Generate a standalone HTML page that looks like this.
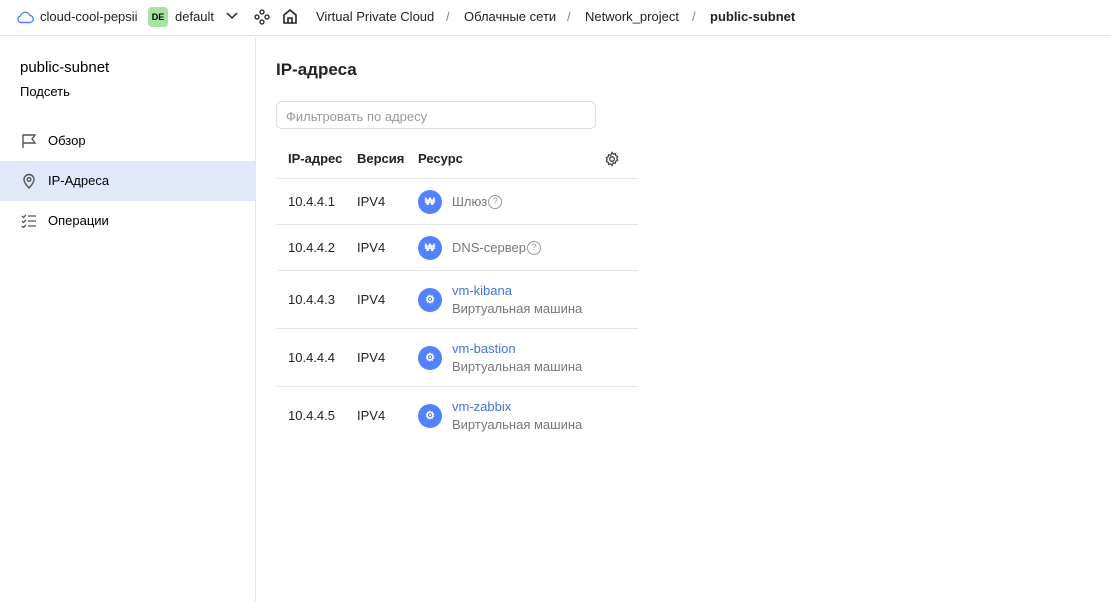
<!DOCTYPE html>
<html><head><meta charset="utf-8"><style>
*{box-sizing:border-box;margin:0;padding:0}
body{width:1111px;height:602px;overflow:hidden;background:#fff;font-family:"Liberation Sans",sans-serif;font-size:13px;color:#000;position:relative}
.top{position:absolute;left:0;top:0;width:1111px;height:36px;border-bottom:1px solid #e5e5e5}
.t{position:absolute;top:9px;font-size:13px;color:#222}
.side{position:absolute;left:0;top:37px;width:256px;height:565px;border-right:1px solid #e5e5e5}
.nav{position:absolute;left:0;width:255px;height:40px}
.nav span{position:absolute;left:48px;top:12px;font-size:13px}
.nav svg{position:absolute;left:21px;top:12px}
.hdr{position:absolute;top:151px;font-size:13px;font-weight:bold;color:#222}
.row{position:absolute;left:276px;width:362px;border-top:1px solid #e5e5e5}
.c{position:absolute;font-size:13px;color:#222;white-space:nowrap}
.ic{position:absolute;left:142px;width:24px;height:24px;border-radius:50%;background:#5282ff;color:#fff;font-size:11px;font-weight:bold;text-align:center;line-height:24px}
.lnk{color:#3e75e0}.gr{color:#777}
.q{display:inline-block;width:14px;height:14px;border:1.3px solid #999;border-radius:50%;font-size:9px;line-height:11px;text-align:center;color:#999;vertical-align:top;margin-left:1px;margin-top:1px}
</style></head><body>
<div class="top">
<svg style="position:absolute;left:16px;top:10px" width="18" height="14" viewBox="0 0 18 14"><path d="M5 12.5h8.5a3.5 3.5 0 0 0 .5-7A5 5 0 0 0 4.5 6 3.3 3.3 0 0 0 5 12.5z" fill="none" stroke="#5282ff" stroke-width="1.4"/></svg>
<span class="t" style="left:40px">cloud-cool-pepsii</span>
<div style="position:absolute;left:148px;top:7px;width:20px;height:20px;background:#a7e3a0;border-radius:4px;font-size:9px;font-weight:bold;text-align:center;line-height:20px">DE</div>
<span class="t" style="left:175px">default</span>
<svg style="position:absolute;left:226px;top:12px" width="12" height="8"><path d="M1 1l5 5 5-5" fill="none" stroke="#222" stroke-width="1.5"/></svg>
<svg style="position:absolute;left:254px;top:9px" width="16" height="16" fill="none" stroke="#222" stroke-width="1.3"><circle cx="8" cy="3" r="2"/><circle cx="3" cy="8" r="2"/><circle cx="13" cy="8" r="2"/><circle cx="8" cy="13" r="2"/></svg>
<svg style="position:absolute;left:282px;top:8px" width="16" height="17" fill="none" stroke="#222" stroke-width="1.6"><path d="M2 7l6-5 6 5v8H2z M6 15v-5h4v5"/></svg>
<span class="t" style="left:316px">Virtual Private Cloud</span>
<span class="t" style="left:446px;color:#888">/</span>
<span class="t" style="left:464px">Облачные сети</span>
<span class="t" style="left:567px;color:#888">/</span>
<span class="t" style="left:585px">Network_project</span>
<span class="t" style="left:692px;color:#888">/</span>
<span class="t" style="left:710px;font-weight:bold">public-subnet</span>
</div>
<div class="side">
<div style="position:absolute;left:20px;top:22px;font-size:15px">public-subnet</div>
<div style="position:absolute;left:20px;top:47px;font-size:13px">Подсеть</div>
<div class="nav" style="top:84px"><svg width="16" height="16" fill="none" stroke="#555" stroke-width="1.4"><path d="M2 15V2h12l-3 4 3 4H2"/></svg><span>Обзор</span></div>
<div class="nav" style="top:124px;background:#e1e8f9"><svg width="16" height="16" fill="none" stroke="#555" stroke-width="1.4"><path d="M8 15s-5-5-5-8.5a5 5 0 0 1 10 0C13 10 8 15 8 15z"/><circle cx="8" cy="6.5" r="1.8"/></svg><span>IP-Адреса</span></div>
<div class="nav" style="top:164px"><svg width="16" height="16" fill="none" stroke="#555" stroke-width="1.3"><path d="M1 3l1.5 1.5L5 2M1 8l1.5 1.5L5 7M1 13l1.5 1.5L5 12M7 3h8M7 8h8M7 13h8"/></svg><span>Операции</span></div>
</div>
<div style="position:absolute;left:276px;top:60px;font-size:17px;font-weight:bold;color:#222">IP-адреса</div>
<div style="position:absolute;left:276px;top:101px;width:320px;height:28px;border:1px solid #ddd;border-radius:6px;padding:7px 9px;color:#999;font-size:13px">Фильтровать по адресу</div>
<span class="hdr" style="left:288px">IP-адрес</span>
<span class="hdr" style="left:357px">Версия</span>
<span class="hdr" style="left:418px">Ресурс</span>
<svg style="position:absolute;left:604px;top:151px" width="16" height="16" fill="none" stroke="#444" stroke-width="1.3"><circle cx="8" cy="8" r="2.3"/><path d="M8 1.5l1.3 1.6 2-.5.5 2 1.8.9-.8 1.9.8 1.9-1.8.9-.5 2-2-.5L8 14.5l-1.3-1.6-2 .5-.5-2-1.8-.9.8-1.9-.8-1.9 1.8-.9.5-2 2 .5z"/></svg>
<div class="row" style="top:178px;height:46px"><span class="c" style="left:12px;top:15px">10.4.4.1</span><span class="c" style="left:81px;top:15px">IPV4</span><div class="ic" style="top:11px">₩</div><span class="c gr" style="left:176px;top:15px">Шлюз<span class="q">?</span></span></div>
<div class="row" style="top:224px;height:46px"><span class="c" style="left:12px;top:15px">10.4.4.2</span><span class="c" style="left:81px;top:15px">IPV4</span><div class="ic" style="top:11px">₩</div><span class="c gr" style="left:176px;top:15px">DNS-сервер<span class="q">?</span></span></div>
<div class="row" style="top:270px;height:58px"><span class="c" style="left:12px;top:21px">10.4.4.3</span><span class="c" style="left:81px;top:21px">IPV4</span><div class="ic" style="top:17px">⚙</div><span class="c lnk" style="left:176px;top:12px">vm-kibana</span><span class="c gr" style="left:176px;top:30px">Виртуальная машина</span></div>
<div class="row" style="top:328px;height:58px"><span class="c" style="left:12px;top:21px">10.4.4.4</span><span class="c" style="left:81px;top:21px">IPV4</span><div class="ic" style="top:17px">⚙</div><span class="c lnk" style="left:176px;top:12px">vm-bastion</span><span class="c gr" style="left:176px;top:30px">Виртуальная машина</span></div>
<div class="row" style="top:386px;height:58px;border-bottom:none"><span class="c" style="left:12px;top:21px">10.4.4.5</span><span class="c" style="left:81px;top:21px">IPV4</span><div class="ic" style="top:17px">⚙</div><span class="c lnk" style="left:176px;top:12px">vm-zabbix</span><span class="c gr" style="left:176px;top:30px">Виртуальная машина</span></div>
</body></html>
